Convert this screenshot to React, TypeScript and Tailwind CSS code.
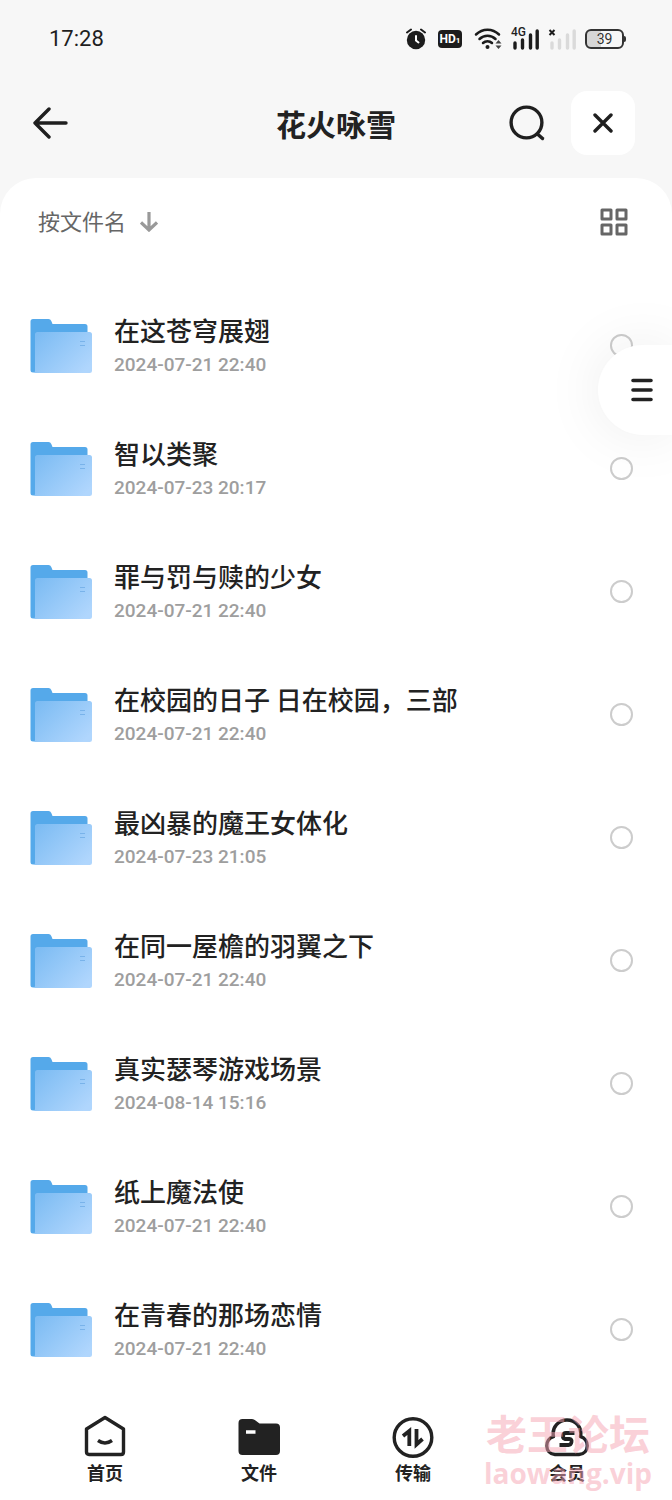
import { useState } from 'react';

const folders = [
  { name: '在这苍穹展翅', date: '2024-07-21 22:40' },
  { name: '智以类聚', date: '2024-07-23 20:17' },
  { name: '罪与罚与赎的少女', date: '2024-07-21 22:40' },
  { name: '在校园的日子 日在校园，三部', date: '2024-07-21 22:40' },
  { name: '最凶暴的魔王女体化', date: '2024-07-23 21:05' },
  { name: '在同一屋檐的羽翼之下', date: '2024-07-21 22:40' },
  { name: '真实瑟琴游戏场景', date: '2024-08-14 15:16' },
  { name: '纸上魔法使', date: '2024-07-21 22:40' },
  { name: '在青春的那场恋情', date: '2024-07-21 22:40' },
];

function StatusBar() {
  return (
    <div className="flex h-[78px] items-center justify-between pl-[49px] pr-[46px] font-[Roboto,sans-serif] text-[#1f1f1f]">
      <span className="text-[22px] leading-7">17:28</span>
      <div className="flex items-center gap-[9px]">
        <div className="flex items-center gap-3">
          {/* Alarm */}
          <svg className="h-[22px] w-[20px]" viewBox="0 0 20 22" fill="none">
            <circle cx="10" cy="12" r="9.2" fill="#1c1c1c" />
            <path d="M1 4.5L5 1.5M19 4.5L15 1.5" stroke="#1c1c1c" strokeWidth="2" strokeLinecap="round" />
            <path d="M10 8V12.5L12.5 14.5" stroke="#fff" strokeWidth="2" strokeLinecap="round" />
          </svg>
          <span className="flex h-[18px] w-[24px] items-baseline justify-center rounded-[4px] bg-[#1c1c1c] font-bold text-white">
            <span className="text-[12px] leading-[18px]">HD</span>
            <span className="text-[8px] leading-[18px]">1</span>
          </span>
          {/* Wifi */}
          <svg className="h-[22px] w-[28px]" viewBox="0 0 28 22" fill="none">
            <path d="M2 6.5C8.5 0 18.5 0 25 6.5M5.5 11C10 6.5 17 6.5 21.5 11M9 15C11.5 12.5 15.5 12.5 18 15" stroke="#1c1c1c" strokeWidth="2.5" strokeLinecap="round" />
            <circle cx="13.5" cy="19" r="2" fill="#1c1c1c" />
            <path d="M21.5 15.5L24.5 12L27.5 15.5ZM21.5 17.5L24.5 21L27.5 17.5Z" fill="#444" />
          </svg>
        </div>
        <div className="relative">
          <svg className="h-[22px] w-[28px]" viewBox="0 0 28 22">
            <path d="M4 15V20M11.5 12V20M19.5 7V20M26.2 3V20" stroke="#1c1c1c" strokeWidth="3.4" strokeLinecap="round" />
          </svg>
          <span className="absolute -top-px left-0 bg-[#f7f7f7] text-[12px] font-medium leading-[11px]">4G</span>
        </div>
        <svg className="h-[22px] w-[28px]" viewBox="0 0 28 22">
          <path d="M4 15V20M11.5 12V20M19.5 7V20M26.2 3V20" stroke="#dadada" strokeWidth="3.4" strokeLinecap="round" />
          <path d="M1.5 2L6.5 7M6.5 2L1.5 7" stroke="#1c1c1c" strokeWidth="2" />
        </svg>
        <div className="flex items-center">
          <span className="flex h-5 w-[39px] items-center justify-center rounded-[6px] border-2 border-[#333] bg-linear-to-r from-[#d6d6d6] from-40% to-[#f7f7f7] to-40% text-[14px] leading-4 text-[#333]">
            39
          </span>
          <span className="h-[6px] w-[2px] rounded-r bg-[#333]" />
        </div>
      </div>
    </div>
  );
}

function Header() {
  return (
    <header className="grid h-[100px] grid-cols-[1fr_auto_1fr] items-start px-[32px] pt-[13px]">
      <button className="flex h-16 w-10 items-center" aria-label="返回">
        <svg className="h-[32px] w-[36px]" viewBox="0 0 36 32" fill="none" stroke="#1f1f1f" strokeWidth="3.4" strokeLinecap="round" strokeLinejoin="round">
          <path d="M17 2L3 16L17 30M3 16H34" />
        </svg>
      </button>
      <h1 className="text-[30px] font-bold leading-16 text-[#222]">花火咏雪</h1>
      <div className="flex items-center justify-end gap-[25px] pr-[5px]">
        <button aria-label="搜索">
          <svg className="h-[38px] w-[38px]" viewBox="0 0 38 38" fill="none" stroke="#1f1f1f" strokeWidth="3.4" strokeLinecap="round">
            <circle cx="18.5" cy="18.5" r="15.4" />
            <path d="M30 30.5L34.5 34.5" />
          </svg>
        </button>
        <button className="flex h-16 w-16 items-center justify-center rounded-2xl bg-white" aria-label="关闭">
          <svg className="h-[20px] w-[20px]" viewBox="0 0 20 20" stroke="#1f1f1f" strokeWidth="3.4" strokeLinecap="round">
            <path d="M2 2L18 18M18 2L2 18" />
          </svg>
        </button>
      </div>
    </header>
  );
}

function FolderIcon() {
  return (
    <svg className="h-[56px] w-[62px] shrink-0" viewBox="0 0 62 56" fill="none">
      <defs>
        <linearGradient id="folderFront" x1="10" y1="14" x2="52" y2="56" gradientUnits="userSpaceOnUse">
          <stop stopColor="#7dbcf3" />
          <stop offset="1" stopColor="#b0d6fd" />
        </linearGradient>
      </defs>
      <path d="M0.5 3.5Q0.5 1 3 1H18.5Q20.5 1 21.3 3L22.5 6H55Q57.5 6 57.5 8.5V54.5H3Q0.5 54.5 0.5 52Z" fill="#55a9ea" />
      <path d="M5 16.5Q5 14 7.5 14H59.5Q62 14 62 16.5V52.5Q62 55 59.5 55H4Q5 54 5 52.5Z" fill="url(#folderFront)" />
      <path d="M50 23.5H55M50 27.5H55" stroke="#79b3ea" strokeWidth="1.2" />
    </svg>
  );
}

function FolderRow({ name, date }: { name: string; date: string }) {
  return (
    <li>
      <label className="flex h-[123px] items-center pl-[30px] pr-[39px]">
        <FolderIcon />
        <span className="ml-[22px] flex min-w-0 flex-1 flex-col gap-0.5">
          <span className="truncate text-[26px] font-medium leading-9 text-[#222]">{name}</span>
          <span className="font-[Roboto,sans-serif] text-[19px] font-medium leading-[30px] text-[#9e9e9e]">{date}</span>
        </span>
        <input type="checkbox" className="h-[23px] w-[23px] appearance-none rounded-full border-2 border-[#ccc] checked:bg-[#55a9ea]" />
      </label>
    </li>
  );
}

function BottomNav() {
  return (
    <nav className="relative grid h-[109px] grid-cols-4 px-7 pt-[23px] text-[18px] font-bold leading-6 text-[#222]">
      <a href="#home" className="flex flex-col items-center gap-0.5">
        <svg className="h-[44px] w-[44px]" viewBox="0 0 44 44" fill="none" stroke="#222" strokeWidth="3.4" strokeLinejoin="round">
          <path d="M22 3.5L40.5 15V38Q40.5 40.5 38 40.5H6Q3.5 40.5 3.5 38V15Z" />
          <path d="M15 26.5Q22 31.5 29 26.5" />
        </svg>
        首页
      </a>
      <a href="#files" className="flex flex-col items-center gap-0.5">
        <svg className="h-[44px] w-[44px]" viewBox="0 0 44 44">
          <path d="M1.5 9Q1.5 5 5.5 5H15Q17 5 18.5 6.5L22.5 9.5H39Q43 9.5 43 13.5V37Q43 41 39 41H5.5Q1.5 41 1.5 37Z" fill="#222" />
          <path d="M9 18H18.5" stroke="#fff" strokeWidth="3.5" />
        </svg>
        文件
      </a>
      <a href="#transfer" className="flex flex-col items-center gap-0.5">
        <svg className="h-[44px] w-[44px]" viewBox="0 0 44 44" fill="none" stroke="#222">
          <circle cx="22" cy="23.5" r="18.8" strokeWidth="3.4" />
          <path d="M12 22L18.3 17V32M25.5 15V30.5L31.5 25" strokeWidth="3.8" />
        </svg>
        传输
      </a>
      <a href="#vip" className="flex flex-col items-center gap-0.5">
        <svg className="h-[44px] w-[44px]" viewBox="0 0 44 44" fill="none" stroke="#222">
          <path d="M10 40.5C-1 39.5 -0.5 25 8.5 22.5C6.5 13 14 6 22 6C30 6 37.5 13 35.5 22.5C44.5 25 45 39.5 34 40.5Z" strokeWidth="3.4" strokeLinejoin="round" />
          <path d="M29.5 19H21Q18.5 19 18 21.5T20 25H24.5Q27 25 26.5 28T23.5 31H14.5" strokeWidth="3.8" />
        </svg>
        会员
      </a>
      {/* Watermark */}
      <div className="pointer-events-none absolute right-[20px] top-[16px] flex flex-col items-center text-[#f5a3b2]/50">
        <span className="text-[41px] font-bold leading-[50px]">老王论坛</span>
        <span className="font-['Open_Sans',sans-serif] text-[28px] font-bold leading-8">laowang.vip</span>
      </div>
    </nav>
  );
}

export default function App() {
  const [menuOpen, setMenuOpen] = useState(false);

  return (
    <div className="relative overflow-hidden bg-[#f7f7f7] font-['Noto_Sans_CJK_SC',sans-serif]">
      <StatusBar />
      <Header />
      <main className="rounded-t-[36px] bg-white">
        <div className="flex h-[106px] items-start justify-between pl-[38px] pr-[44px] pt-[26px]">
          <button className="flex items-center gap-[14px] text-[22px] leading-8 text-[#666]">
            按文件名
            <svg className="mt-1 h-[20px] w-[18px]" viewBox="0 0 18 20" fill="none" stroke="#999" strokeWidth="3.2">
              <path d="M9 0V18M1 10.5L9 18L17 10.5" />
            </svg>
          </button>
          <button className="flex h-9 items-center" aria-label="网格视图">
            <svg className="h-[28px] w-[28px]" viewBox="0 0 28 28" fill="none" stroke="#666" strokeWidth="3" strokeLinejoin="round">
              <path d="M2 2H11V11H2ZM17 2H26V11H17ZM2 17H11V26H2ZM17 17H26V26H17Z" />
            </svg>
          </button>
        </div>
        <ul>
          {folders.map((folder) => (
            <FolderRow key={folder.name} name={folder.name} date={folder.date} />
          ))}
        </ul>
        <BottomNav />
      </main>

      {/* Floating menu */}
      <button
        className="absolute right-0 top-[345px] flex h-[90px] w-[74px] items-center rounded-l-full bg-white pl-[33px] shadow-[0_0_60px_rgba(0,0,0,0.08)]"
        aria-label="菜单"
        aria-expanded={menuOpen}
        onClick={() => setMenuOpen(!menuOpen)}
      >
        <svg className="h-[24px] w-[22px]" viewBox="0 0 22 24" stroke="#222" strokeWidth="3.6" strokeLinecap="round">
          <path d="M2 2.5H20M2 12H20M2 21.5H20" />
        </svg>
      </button>
    </div>
  );
}
